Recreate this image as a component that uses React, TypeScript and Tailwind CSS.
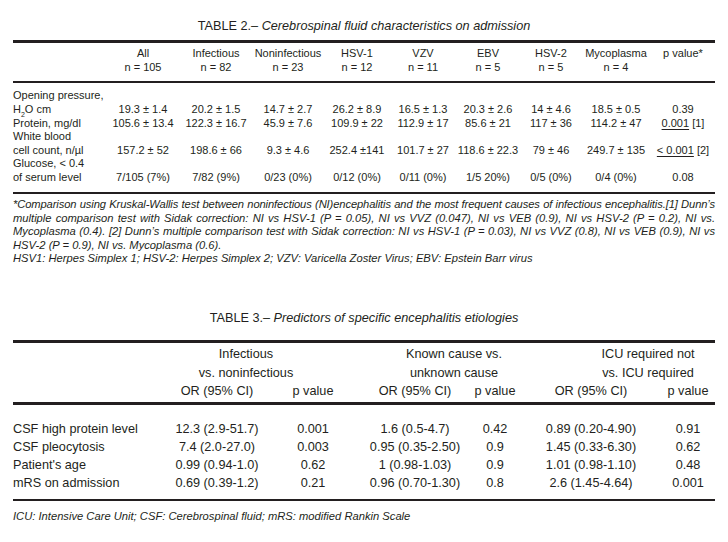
import React from "react";

const Rule = () => <div className="h-[2.5px] w-full bg-[#231f20]" />;

const t2Grid = "grid grid-cols-[93px_74px_72px_72px_66px_66px_64px_62px_68px_66px]";
const t3Grid = "grid grid-cols-[152px_104px_88px_116px_44px_148px_46px]";

const Cell = ({ children }: { children: React.ReactNode }) => (
  <div className="flex justify-center whitespace-nowrap">{children}</div>
);

const t2Headers: [string, string][] = [
  ["All", "n = 105"],
  ["Infectious", "n = 82"],
  ["Noninfectious", "n = 23"],
  ["HSV-1", "n = 12"],
  ["VZV", "n = 11"],
  ["EBV", "n = 5"],
  ["HSV-2", "n = 5"],
  ["Mycoplasma", "n = 4"],
  ["p value*", ""],
];

type T2Row = { label: React.ReactNode; values: React.ReactNode[] };

const t2Rows: T2Row[] = [
  {
    label: (
      <>
        Opening pressure,
        <br />
        H<sub className="text-[7px] align-[-2px]">2</sub>O cm
      </>
    ),
    values: ["19.3 ± 1.4", "20.2 ± 1.5", "14.7 ± 2.7", "26.2 ± 8.9", "16.5 ± 1.3", "20.3 ± 2.6", "14 ± 4.6", "18.5 ± 0.5", "0.39"],
  },
  {
    label: <>Protein, mg/dl</>,
    values: [
      "105.6 ± 13.4",
      "122.3 ± 16.7",
      "45.9 ± 7.6",
      "109.9 ± 22",
      "112.9 ± 17",
      "85.6 ± 21",
      "117 ± 36",
      "114.2 ± 47",
      <span key="p">
        <span className="underline underline-offset-[2px]">0.001</span> [1]
      </span>,
    ],
  },
  {
    label: (
      <>
        White blood
        <br />
        cell count, n/µl
      </>
    ),
    values: [
      "157.2 ± 52",
      "198.6 ± 66",
      "9.3 ± 4.6",
      "252.4 ±141",
      "101.7 ± 27",
      "118.6 ± 22.3",
      "79 ± 46",
      "249.7 ± 135",
      <span key="p">
        <span className="underline underline-offset-[2px]">&lt; 0.001</span> [2]
      </span>,
    ],
  },
  {
    label: (
      <>
        Glucose, &lt; 0.4
        <br />
        of serum level
      </>
    ),
    values: ["7/105 (7%)", "7/82 (9%)", "0/23 (0%)", "0/12 (0%)", "0/11 (0%)", "1/5 20%)", "0/5 (0%)", "0/4 (0%)", "0.08"],
  },
];

const footLines = [
  "*Comparison using Kruskal-Wallis test between noninfectious (NI)encephalitis and the most frequent causes of infectious encephalitis.[1] Dunn’s",
  "multiple comparison test with Sidak correction: NI vs HSV-1 (P = 0.05), NI vs VVZ (0.047), NI vs VEB (0.9), NI vs HSV-2 (P = 0.2), NI vs.",
  "Mycoplasma (0.4). [2] Dunn’s multiple comparison test with Sidak correction: NI vs HSV-1 (P = 0.03), NI vs VVZ (0.8), NI vs VEB (0.9), NI vs",
];

const t3Rows: string[][] = [
  ["CSF high protein level", "12.3 (2.9-51.7)", "0.001", "1.6 (0.5-4.7)", "0.42", "0.89 (0.20-4.90)", "0.91"],
  ["CSF pleocytosis", "7.4 (2.0-27.0)", "0.003", "0.95 (0.35-2.50)", "0.9", "1.45 (0.33-6.30)", "0.62"],
  ["Patient's age", "0.99 (0.94-1.0)", "0.62", "1 (0.98-1.03)", "0.9", "1.01 (0.98-1.10)", "0.48"],
  ["mRS on admission", "0.69 (0.39-1.2)", "0.21", "0.96 (0.70-1.30)", "0.8", "2.6 (1.45-4.64)", "0.001"],
];

export default function App() {
  return (
    <div className="w-[728px] h-[542px] overflow-hidden bg-white text-[#231f20] font-['Liberation_Sans',Arial,sans-serif] px-[13px] pt-[18px]">
      {/* TABLE 2 */}
      <div className="text-center text-[12.7px] leading-[16px]">
        TABLE 2.– <span className="italic">Cerebrospinal fluid characteristics on admission</span>
      </div>
      <div className="mt-[6px]">
        <Rule />
      </div>
      <div className={`${t2Grid} text-[11px] leading-[14.4px] pt-[3.5px] pb-[6px]`}>
        <div />
        {t2Headers.map(([a, b]) => (
          <div key={a} className="flex flex-col items-center whitespace-nowrap">
            <span>{a}</span>
            <span>{b || "\u00a0"}</span>
          </div>
        ))}
      </div>
      <Rule />
      <div className="text-[11px] leading-[13.6px] pt-[6px] pb-[7.5px]">
        {t2Rows.map((r, i) => (
          <div key={i} className={`${t2Grid} items-end`}>
            <div className="whitespace-nowrap">{r.label}</div>
            {r.values.map((v, j) => (
              <Cell key={j}>{v}</Cell>
            ))}
          </div>
        ))}
      </div>
      <Rule />
      <div className="mt-[4px] text-[11.2px] leading-[13.5px] italic">
        {footLines.map((l, i) => (
          <div
            key={i}
            className={`text-justify [text-align-last:justify] ${i === 0 ? "tracking-[-0.12px]" : ""}`}
          >
            {l}
          </div>
        ))}
        <div>HSV-2 (P = 0.9), NI vs. Mycoplasma (0.6).</div>
        <div>HSV1: Herpes Simplex 1; HSV-2: Herpes Simplex 2; VZV: Varicella Zoster Virus; EBV: Epstein Barr virus</div>
      </div>

      {/* TABLE 3 */}
      <div className="mt-[44.5px] text-center text-[12.7px] leading-[16px]">
        TABLE 3.– <span className="italic">Predictors of specific encephalitis etiologies</span>
      </div>
      <div className="mt-[14px]">
        <Rule />
      </div>
      <div className="text-[12.7px] leading-[18.3px] pt-[2.5px] pb-[2px]">
        <div className={t3Grid}>
          <div />
          <div className="col-span-2 flex flex-col items-center pr-[30px]">
            <span>Infectious</span>
            <span>vs. noninfectious</span>
          </div>
          <div className="col-span-2 flex flex-col items-center pl-[34px]">
            <span>Known cause vs.</span>
            <span>unknown cause</span>
          </div>
          <div className="col-span-2 flex flex-col items-center pl-[68px]">
            <span>ICU required not</span>
            <span>vs. ICU required</span>
          </div>
        </div>
        <div className={t3Grid}>
          <div />
          <Cell>OR (95% CI)</Cell>
          <Cell>p value</Cell>
          <Cell>OR (95% CI)</Cell>
          <Cell>p value</Cell>
          <Cell>OR (95% CI)</Cell>
          <Cell>p value</Cell>
        </div>
      </div>
      <Rule />
      <div className="text-[12.7px] leading-[18px] pt-[15px] pb-[7px]">
        {t3Rows.map((r) => (
          <div key={r[0]} className={t3Grid}>
            <div className="whitespace-nowrap">{r[0]}</div>
            {r.slice(1).map((v, j) => (
              <Cell key={j}>{v}</Cell>
            ))}
          </div>
        ))}
      </div>
      <Rule />
      <div className="mt-[9px] text-[11.2px] leading-[13.5px] italic">
        ICU: Intensive Care Unit; CSF: Cerebrospinal fluid; mRS: modified Rankin Scale
      </div>
    </div>
  );
}
